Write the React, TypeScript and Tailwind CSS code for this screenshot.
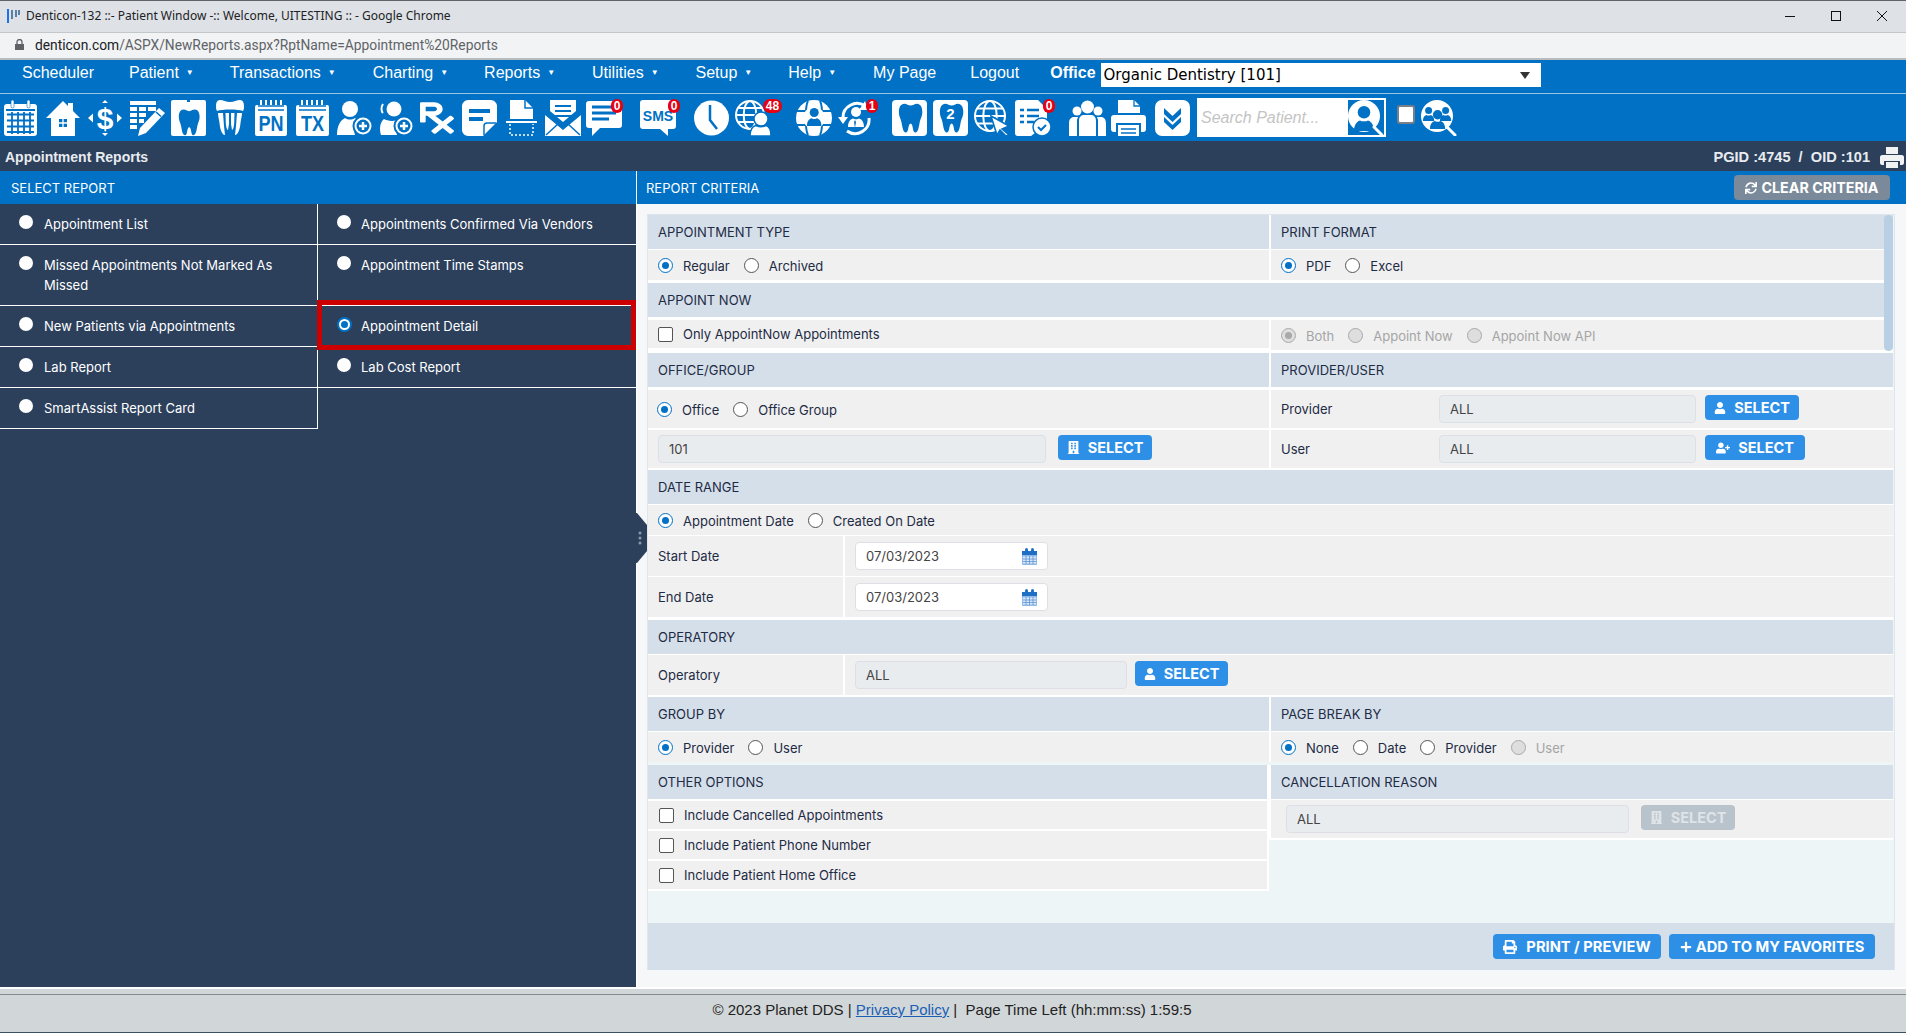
import { ReactNode } from "react";
import { FaBuilding, FaPlus, FaPrescription, FaPrint, FaSync, FaUser, FaUserPlus } from "react-icons/fa";

const BLUE = "#0071c5";
const TOOTH =
  "M7 2C3 2 1 6 1 11c0 5 2 7 3 12 1 6 2 11 5 11s2-10 5-10 2 10 5 10 4-5 5-11c1-5 3-7 3-12 0-5-2-9-6-9-3 0-4 2-7 2S10 2 7 2Z";

function Svg({ w, children }: { w: number; children: ReactNode }) {
  return (
    <svg width={w} height={36} viewBox={`0 0 ${w} 36`} fill="#fff">
      {children}
    </svg>
  );
}

function Globe({ cx = 18, cy = 18, r = 16 }: { cx?: number; cy?: number; r?: number }) {
  return (
    <g fill="none" stroke="#fff" strokeWidth="2">
      <circle cx={cx} cy={cy} r={r} />
      <ellipse cx={cx} cy={cy} rx={r * 0.45} ry={r} />
      <path d={`M${cx - r} ${cy}h${2 * r}M${cx - r * 0.85} ${cy - r * 0.5}h${1.7 * r}M${cx - r * 0.85} ${cy + r * 0.5}h${1.7 * r}`} />
    </g>
  );
}

function Person({ x, y, s = 1, fill = "#fff" }: { x: number; y: number; s?: number; fill?: string }) {
  return (
    <g transform={`translate(${x} ${y}) scale(${s})`} fill={fill}>
      <circle cx="8" cy="5" r="5" />
      <path d="M0 20c0-6 3-8 5-8.500 1 1 5 1 6 0 2 .5 5 2.500 5 8.500Z" />
    </g>
  );
}

function PlusDisc({ cx, cy }: { cx: number; cy: number }) {
  return (
    <g>
      <circle cx={cx} cy={cy} r="9.500" fill="#fff" stroke={BLUE} strokeWidth="2" />
      <circle cx={cx} cy={cy} r="6.500" fill={BLUE} />
      <path d={`M${cx - 4} ${cy}h8M${cx} ${cy - 4}v8`} stroke="#fff" strokeWidth="2.500" />
    </g>
  );
}

const CalendarIcon = () => (
  <Svg w={33}>
    <rect x="0" y="4" width="33" height="32" rx="3" />
    <path d="M2 10h29" stroke={BLUE} strokeWidth="2" />
    <path
      d="M3 14.500h27M3 20.500h27M3 26.500h27M3 32h27M8 12v22M14 12v22M20 12v22M26 12v22"
      stroke={BLUE}
      strokeWidth="1.800"
    />
    <rect x="7" y="0" width="3" height="8" rx="1.500" stroke={BLUE} strokeWidth=".6" />
    <rect x="23" y="0" width="3" height="8" rx="1.500" stroke={BLUE} strokeWidth=".6" />
  </Svg>
);

const HomeIcon = () => (
  <Svg w={34}>
    <path d="M17 1 0 18h5v18h24V18h5l-7-7V3h-5v3Z" />
    <path d="M13 19h8v8h-8Z" fill={BLUE} />
    <path d="M17 19v8M13 23h8" stroke="#fff" strokeWidth="1.300" />
  </Svg>
);

const DollarIcon = () => (
  <Svg w={34}>
    <text x="17" y="29" textAnchor="middle" fontFamily="Liberation Sans" fontWeight="700" fontSize="30">
      $
    </text>
    <path d="M0 18l5-4.500v9ZM34 18l-5-4.500v9ZM17 0l-3 3h6ZM17 36l-3-3h6Z" />
  </Svg>
);

const TablePencilIcon = () => (
  <Svg w={36}>
    <path d="M1 1h26v4H1ZM1 7h7v4H1ZM10 7h7v4h-7ZM19 7h8v4h-8ZM1 13h7v4H1ZM10 13h7v4h-7ZM1 19h7v4H1ZM10 19h5v4h-5ZM1 25h7v4H1Z" />
    <path d="M30 8l6 5-19 20-8 3 2-8Z" />
    <path d="M27 12l5 4.500" stroke={BLUE} strokeWidth="1.500" />
  </Svg>
);

const ToothBoxIcon = () => (
  <Svg w={35}>
    <rect x="0" y="0" width="35" height="36" rx="2" />
    <path d="M16 0h3v2h-3Z" fill={BLUE} />
    <g transform="translate(7 8) scale(.8)" fill={BLUE}>
      <path d={TOOTH} />
    </g>
  </Svg>
);

const ToothBoxLarge = ({ two }: { two?: boolean }) => (
  <Svg w={35}>
    <rect x="0" y="0" width="35" height="36" rx="4" />
    <g transform="translate(6 2) scale(.9)" fill={BLUE}>
      <path d={TOOTH} />
    </g>
    {two && (
      <text x="17.500" y="19" textAnchor="middle" fontFamily="Liberation Sans" fontWeight="700" fontSize="15" fill="#fff">
        2
      </text>
    )}
  </Svg>
);

const RootsIcon = () => (
  <Svg w={28}>
    <path d="M4 0c3 0 6 2 10 2s7-2 10-2c3 0 4 3 4 6 0 2 0 3-1 5-5-2-21-2-26 0C0 9 0 8 0 6c0-3 1-6 4-6Z" />
    <path d="M2 13h5l1 13 1 9c-3 0-5-6-5.500-12C3 19 2 16 2 13ZM9.500 13h3.500v11l-1 6c-1 0-2-3-2.200-7ZM15 13h3.500l-.3 10c-.2 4-1.200 7-2.200 7l-1-6ZM21 13h5c0 3-1 6-1.500 10-.5 6-2.500 12-5.500 12l1-9Z" />
  </Svg>
);

const PadIcon = ({ w, label }: { w: number; label: string }) => (
  <Svg w={w}>
    <rect x="0" y="5" width={w} height="31" rx="2" />
    <path d={`M6 0v9M11 0v9M16 0v9M21 0v9M26 0v9`} stroke="#fff" strokeWidth="2" />
    <path d={`M3 6h${w - 6}M3 10h${w - 6}`} stroke={BLUE} strokeWidth="1.500" />
    <text
      transform={`translate(${w / 2} 31) scale(.95 1.200)`}
      textAnchor="middle"
      fontFamily="Liberation Sans"
      fontWeight="700"
      fontSize="19"
      fill={BLUE}
    >
      {label}
    </text>
  </Svg>
);

const UserPlusIcon = () => (
  <Svg w={36}>
    <circle cx="13" cy="9" r="8" />
    <path d="M0 35c0-10 4-15 8-17 3 2 7 2 10 0l4 2c-4 3-6 9-4 15Z" />
    <PlusDisc cx={26} cy={26} />
  </Svg>
);

const UsersPlusIcon = () => (
  <Svg w={36}>
    <circle cx="16" cy="9" r="7.500" />
    <path d="M3 35c-2-6-1-13 3-16 3 2 11 3 15 0l3 2c-4 3-6 9-5 14Z" />
    <path d="M5 4c-2 3-2 7 0 9" fill="none" stroke="#fff" strokeWidth="2" />
    <PlusDisc cx={26} cy={26} />
  </Svg>
);

const NoteIcon = () => (
  <Svg w={35}>
    <path d="M6 0h23c3 0 6 3 6 6v16L21 36H6c-3 0-6-3-6-6V6c0-3 3-6 6-6Z" />
    <path d="M7 9h21v4H7ZM7 17h14v4H7Z" fill={BLUE} />
    <path d="M22 35V26c0-2 1-3 3-3h9" fill="none" stroke={BLUE} strokeWidth="1.500" />
  </Svg>
);

const ScanDocIcon = () => (
  <Svg w={31}>
    <path d="M4 0h15l8 8v11H4Z" />
    <path d="M19 0v8h8" fill="none" stroke={BLUE} strokeWidth="1.500" />
    <path d="M0 22h31" stroke="#fff" strokeWidth="2" />
    <path d="M4 24v11h23V24" fill="none" stroke="#fff" strokeWidth="1.500" strokeDasharray="2 2" />
  </Svg>
);

const MailIcon = () => (
  <Svg w={36}>
    <path d="M0 15 18 30l18-15v21H0Z" />
    <path d="M5 11V0h26v11l-13 11Z" />
    <path d="M10 6h16M10 11h16M10 16h16" stroke={BLUE} strokeWidth="2" />
    <path d="M1 35l12-11M35 35 23 24" stroke={BLUE} strokeWidth="1.500" />
  </Svg>
);

const ChatIcon = () => (
  <Svg w={36}>
    <path d="M3 1h30c2 0 3 1 3 3v21c0 2-1 3-3 3H14l-8 8v-8H3c-2 0-3-1-3-3V4c0-2 1-3 3-3Z" />
    <path d="M6 7h24M6 13h24M6 19h17" stroke={BLUE} strokeWidth="3" />
  </Svg>
);

const SmsIcon = () => (
  <Svg w={36}>
    <path d="M3 0h30c2 0 3 1 3 3v23c0 2-1 3-3 3h-5v7l-8-7H3c-2 0-3-1-3-3V3c0-2 1-3 3-3Z" />
    <text x="18" y="21" textAnchor="middle" fontFamily="Liberation Sans" fontWeight="700" fontSize="14" fill={BLUE}>
      SMS
    </text>
  </Svg>
);

const ClockIcon = () => (
  <Svg w={35}>
    <circle cx="17.500" cy="18" r="17.500" />
    <path d="M16 5v15l7 9" fill="none" stroke={BLUE} strokeWidth="2.500" />
  </Svg>
);

const GlobeUserIcon = () => (
  <Svg w={36}>
    <Globe cx={15} cy={15} r={14} />
    <circle cx="26" cy="19" r="7" stroke={BLUE} strokeWidth="1.500" />
    <path d="M15 36c0-8 4-10 6-10.500 3 1.500 7 1.500 10 0 2 .5 5 2.500 5 10.500Z" stroke={BLUE} strokeWidth="1.500" />
  </Svg>
);

const GlobePersonIcon = () => (
  <Svg w={36}>
    <circle cx="18" cy="18" r="18" />
    <path d="M0 11h36M0 25h36M12 1c-3 5-3 29 0 34M24 1c3 5 3 29 0 34" fill="none" stroke={BLUE} strokeWidth="2" />
    <circle cx="18" cy="18" r="11" />
    <Person x={11} y={8} s={0.9} fill={BLUE} />
  </Svg>
);

const RefreshUserIcon = () => (
  <Svg w={35}>
    <path d="M5 18A14 14 0 0 1 27 6" fill="none" stroke="#fff" strokeWidth="3" />
    <path d="M31 18A14 14 0 0 1 9 31" fill="none" stroke="#fff" strokeWidth="3" />
    <path d="M0 17h10l-5 7ZM27 1l3 9-9 0Z" />
    <Person x={10} y={7} s={1} />
    <path d="M17 20l1 2-1 6-1-6Z" fill={BLUE} />
  </Svg>
);

const GlobeCursorIcon = () => (
  <Svg w={35}>
    <Globe cx={16} cy={16} r={15} />
    <path d="M17 16 35 26l-7 3 7 6-3 1-6-6-3 5Z" stroke={BLUE} strokeWidth="1.500" />
  </Svg>
);

const DocCheckIcon = () => (
  <Svg w={36}>
    <path d="M3 0h20l9 9v15l-16 12H3c-2 0-3-1-3-3V3c0-2 1-3 3-3Z" />
    <path d="M5 10h4M12 10h12M5 16h4M12 16h12M5 22h4M12 22h7" stroke={BLUE} strokeWidth="2.500" />
    <circle cx="27" cy="27" r="9" stroke={BLUE} strokeWidth="1.500" />
    <path d="M23 27l3 3 5-5" fill="none" stroke={BLUE} strokeWidth="2" />
  </Svg>
);

const PeopleIcon = () => (
  <Svg w={37}>
    <circle cx="8" cy="11" r="4.500" />
    <circle cx="29" cy="11" r="4.500" />
    <circle cx="18.500" cy="7" r="6.500" />
    <path d="M0 36V24c0-5 2-7 5-7h4l-1 3v16ZM37 36V24c0-5-2-7-5-7h-4l1 3v16ZM10 36V21c0-5 3-6 5-6h7c2 0 5 1 5 6v15Z" />
  </Svg>
);

const PrinterIcon = () => (
  <Svg w={35}>
    <path d="M7 0h16l6 6v7H7Z" />
    <path d="M23 0v6h6" fill="none" stroke={BLUE} strokeWidth="1.300" />
    <path d="M3 15h29c2 0 3 1 3 3v11c0 2-1 3-3 3h-2v-9H5v9H3c-2 0-3-1-3-3V18c0-2 1-3 3-3Z" />
    <path d="M7 25h21v11H7Z" />
    <path d="M10 29h15M10 33h15" stroke={BLUE} strokeWidth="1.500" />
  </Svg>
);

const ChevronsIcon = () => (
  <Svg w={35}>
    <rect x="0" y="0" width="35" height="36" rx="7" />
    <path d="M9 8l8.500 8L26 8v6l-8.500 8L9 14ZM9 17l8.500 8L26 17v5l-8.500 8L9 22Z" fill={BLUE} />
  </Svg>
);

const SearchUserIcon = () => (
  <svg width="36" height="36" viewBox="0 0 36 36" fill="#fff">
    <circle cx="16" cy="16" r="16" />
    <Person x={6} y={6} s={1.250} fill={BLUE} />
    <path d="M26 27l8 8" stroke="#fff" strokeWidth="3" strokeLinecap="round" />
  </svg>
);

const SearchGroupIcon = () => (
  <Svg w={36}>
    <circle cx="16" cy="16" r="16" />
    <Person x={2} y={7} s={0.7} fill={BLUE} />
    <Person x={19} y={7} s={0.7} fill={BLUE} />
    <Person x={9} y={10} s={0.95} fill={BLUE} />
    <path d="M26 27l8 8" stroke="#fff" strokeWidth="3" strokeLinecap="round" />
  </Svg>
);

function MiniCalendar() {
  return (
    <svg width="15" height="17" viewBox="0 0 15 17" className="ml-auto mr-[10px] mt-[1px]">
      <rect x="0" y="3" width="15" height="14" rx="1" fill="#8db8e8" />
      <rect x="0" y="3" width="15" height="4" fill="#1f6fc4" />
      <rect x="3" y="0" width="3" height="5" rx="1.500" fill="#1f6fc4" />
      <rect x="9" y="0" width="3" height="5" rx="1.500" fill="#1f6fc4" />
      <path d="M1 8.500h13v7H1Z" fill="#dbe8f7" />
      <path d="M1 11h13M1 13.500h13M4 8v8M7.500 8v8M11 8v8" stroke="#5b93d3" strokeWidth=".8" />
    </svg>
  );
}

function Badge({ label, className }: { label: string; className: string }) {
  return (
    <span
      className={`absolute flex h-[14px] items-center justify-center rounded-full bg-[#e60012] font-['Liberation_Sans',sans-serif] text-[12px] leading-none font-bold text-white ${className}`}
    >
      {label}
    </span>
  );
}

function NavItem({ label, caret, className = "" }: { label: string; caret?: boolean; className?: string }) {
  return (
    <div className={`mb-[7px] flex items-center px-[18px] whitespace-nowrap ${className}`}>
      <span>{label}</span>
      {caret && <span className="ml-[7px] text-[8px] leading-none">▼</span>}
    </div>
  );
}

function Radio({ checked, disabled, big }: { checked?: boolean; disabled?: boolean; big?: boolean }) {
  if (big) {
    return checked ? (
      <span className="flex h-[15px] w-[15px] shrink-0 items-center justify-center rounded-full border-[2px] border-[#0071c5] bg-white">
        <span className="h-[7px] w-[7px] rounded-full bg-[#0071c5]" />
      </span>
    ) : (
      <span className="h-[14px] w-[14px] shrink-0 rounded-full bg-white" />
    );
  }
  if (disabled) {
    return (
      <span className="flex h-[15px] w-[15px] shrink-0 items-center justify-center rounded-full border border-[#a9a9a9] bg-[#dedede]">
        {checked && <span className="h-[7px] w-[7px] rounded-full bg-[#a9a9a9]" />}
      </span>
    );
  }
  return checked ? (
    <span className="flex h-[15px] w-[15px] shrink-0 items-center justify-center rounded-full border-[1.5px] border-[#0071c5] bg-white">
      <span className="h-[7px] w-[7px] rounded-full bg-[#0071c5]" />
    </span>
  ) : (
    <span className="h-[15px] w-[15px] shrink-0 rounded-full border-[1.5px] border-[#555] bg-white" />
  );
}

type Opt = { label: string; checked?: boolean; disabled?: boolean };

function RadioRow({ opts }: { opts: Opt[] }) {
  return (
    <div className="flex items-center gap-[14px]">
      {opts.map((o) => (
        <label key={o.label} className="flex items-center gap-[10px]">
          <Radio checked={o.checked} disabled={o.disabled} />
          <span className={`mt-[1px] ${o.disabled ? "text-[#a5a5a5]" : ""}`}>{o.label}</span>
        </label>
      ))}
    </div>
  );
}

function Check({ label }: { label: string }) {
  return (
    <label className="flex items-center gap-[10px]">
      <span className="h-[15px] w-[15px] shrink-0 rounded-[2px] border-[1.5px] border-[#555] bg-white" />
      <span>{label}</span>
    </label>
  );
}

function Head({ children }: { children?: ReactNode }) {
  return <div className="flex h-[34px] items-center bg-[#d5dfe9] pl-[10px] text-[#1e2b45]">{children}</div>;
}

function Field({ value, className, white, children }: { value: string; className: string; white?: boolean; children?: ReactNode }) {
  return (
    <div
      className={`flex h-[28px] items-center rounded-[4px] border border-[#dcdfe6] pl-[10px] text-[#444] ${white ? "bg-white" : "bg-[#e9ecef]"} ${className}`}
    >
      {value}
      {children}
    </div>
  );
}

function SelectBtn({ icon, className, disabled }: { icon: ReactNode; className: string; disabled?: boolean }) {
  return (
    <button
      className={`flex h-[25px] items-center justify-center gap-[8px] rounded-[4px] text-[14.500px] font-bold ${disabled ? "bg-[#b9c3cc] text-[#dfe4e8]" : "bg-[#2e8fe6] text-white"} ${className}`}
    >
      {icon}
      SELECT
    </button>
  );
}

function Report({ label, checked, col2, tall, last }: { label: string; checked?: boolean; col2?: boolean; tall?: boolean; last?: boolean }) {
  return (
    <div
      className={`flex items-start pt-[11px] pr-[16px] ${tall ? "h-[61px]" : "h-[41px]"} ${col2 ? (checked ? "gap-[9px] pl-[19px]" : "gap-[10px] pl-[19px]") : "gap-[11px] border-r border-white pl-[19px]"} ${last ? "" : "border-b border-white"} ${last && !col2 ? "border-b border-white" : ""}`}
    >
      <Radio big checked={checked} />
      <span className="-mt-[1.5px] text-white">{label}</span>
    </div>
  );
}

export default function App() {
  return (
    <div className="flex h-screen flex-col overflow-hidden bg-white font-['Inter',sans-serif] text-[13px] leading-[20px] text-[#1e2b45]">
      {/* Chrome title */}
      <div className="flex h-[32px] shrink-0 items-center border-t border-[#5f6368] bg-[#dee1e6] pb-[1px] pl-[7px] font-['Noto_Sans',sans-serif] text-[12px] text-[#202124]">
        <svg width="13" height="14" viewBox="0 0 13 14" className="mr-[6px]">
          <path d="M0 0h2v14H0Z" fill="#1a73e8" />
          <path d="M4 1h2v9H4ZM8 1h2v7H8ZM11 1h2v5h-2Z" fill="#5a7fa8" />
        </svg>
        <span>Denticon-132 ::- Patient Window -:: Welcome, UITESTING :: - Google Chrome</span>
        <div className="ml-auto flex items-center gap-[36px] pr-[19px]">
          <span className="h-px w-[10px] bg-[#111]" />
          <span className="h-[10px] w-[10px] border border-[#111]" />
          <svg width="10" height="10" viewBox="0 0 10 10" stroke="#111" strokeWidth="1">
            <path d="M0 0l10 10M10 0 0 10" />
          </svg>
        </div>
      </div>
      {/* Chrome address */}
      <div className="flex h-[28px] shrink-0 items-center border-t border-b-2 border-t-[#c4c7ca] border-b-[#b9bcbf] bg-[#f1f3f4] pb-[2px] pl-[15px] font-['Roboto',sans-serif] text-[13.800px] text-[#5f6368]">
        <svg width="9" height="11" viewBox="0 0 9 11" className="mr-[11px]" fill="#5f6368">
          <path d="M0 5h9v6H0Z" />
          <path d="M2 5V3a2.500 2.500 0 0 1 5 0v2" fill="none" stroke="#5f6368" strokeWidth="1.300" />
        </svg>
        <span>
          <span className="text-[#202124]">denticon.com</span>/ASPX/NewReports.aspx?RptName=Appointment%20Reports
        </span>
      </div>
      {/* Menu */}
      <div className="flex h-[34px] shrink-0 items-center border-b border-[#9cc4e4] bg-[#0071c5] pl-[4px] font-['Liberation_Sans',sans-serif] text-[16px] text-white">
        <NavItem label="Scheduler" />
        <NavItem label="Patient" caret className="-ml-[1px]" />
        <NavItem label="Transactions" caret />
        <NavItem label="Charting" caret className="ml-[1px]" />
        <NavItem label="Reports" caret />
        <NavItem label="Utilities" caret className="ml-[1px]" />
        <NavItem label="Setup" caret className="ml-[1px]" />
        <NavItem label="Help" caret />
        <NavItem label="My Page" className="ml-[1px]" />
        <NavItem label="Logout" className="-ml-[2px]" />
        <span className="mb-[7px] ml-[13px] font-bold">Office</span>
        <div className="mb-[4px] ml-[5px] flex h-[24px] w-[440px] items-center bg-white pl-[3px] font-['DejaVu_Sans',sans-serif] text-[15px] text-black">
          Organic Dentistry [101]
          <span className="ml-auto mr-[11px] mt-[2px] h-0 w-0 border-x-[5px] border-t-[7px] border-x-transparent border-t-[#333]" />
        </div>
      </div>
      {/* Icon bar */}
      <div className="flex h-[47px] shrink-0 items-center bg-[#0071c5] pl-[4px]">
        <div><CalendarIcon /></div>
        <div className="ml-[9px]"><HomeIcon /></div>
        <div className="ml-[8px]"><DollarIcon /></div>
        <div className="ml-[7px]"><TablePencilIcon /></div>
        <div className="ml-[6px]"><ToothBoxIcon /></div>
        <div className="ml-[10px]"><RootsIcon /></div>
        <div className="ml-[11px]"><PadIcon w={32} label="PN" /></div>
        <div className="ml-[9px]"><PadIcon w={33} label="TX" /></div>
        <div className="ml-[8px]"><UserPlusIcon /></div>
        <div className="ml-[5px]"><UsersPlusIcon /></div>
        <div className="ml-[6px] h-[36px] w-[34px] text-white">
          <FaPrescription className="h-[36px] w-[34px]" preserveAspectRatio="none" />
        </div>
        <div className="ml-[8px]"><NoteIcon /></div>
        <div className="ml-[9px]"><ScanDocIcon /></div>
        <div className="ml-[8px]"><MailIcon /></div>
        <div className="relative ml-[5px]">
          <ChatIcon />
          <Badge label="0" className="-top-[1px] -right-[1px] w-[12px]" />
        </div>
        <div className="relative ml-[18px]">
          <SmsIcon />
          <Badge label="0" className="-top-[1px] -right-[4px] w-[12px]" />
        </div>
        <div className="ml-[18px]"><ClockIcon /></div>
        <div className="relative ml-[6px]">
          <GlobeUserIcon />
          <Badge label="48" className="-top-[1px] -right-[11px] w-[19px]" />
        </div>
        <div className="ml-[25px]"><GlobePersonIcon /></div>
        <div className="relative ml-[6px]">
          <RefreshUserIcon />
          <Badge label="1" className="-top-[1px] -right-[5px] w-[12px]" />
        </div>
        <div className="ml-[19px]"><ToothBoxLarge /></div>
        <div className="ml-[6px]"><ToothBoxLarge two /></div>
        <div className="ml-[6px]"><GlobeCursorIcon /></div>
        <div className="relative ml-[6px]">
          <DocCheckIcon />
          <Badge label="0" className="-top-[1px] -right-[4px] w-[12px]" />
        </div>
        <div className="ml-[18px]"><PeopleIcon /></div>
        <div className="ml-[5px]"><PrinterIcon /></div>
        <div className="ml-[9px]"><ChevronsIcon /></div>
        <div className="ml-[7px] flex h-[39px] w-[189px] items-center justify-between bg-white pl-[4px] pr-[2px] font-['Liberation_Sans',sans-serif] text-[16px] text-[#c4c4c4] italic">
          Search Patient...
          <span className="flex h-[35px] w-[36px] bg-[#0071c5]">
            <SearchUserIcon />
          </span>
        </div>
        <span className="ml-[11px] mb-[6px] h-[19px] w-[18px] rounded-[3px] border-2 border-[#75808a] bg-white" />
        <div className="ml-[6px]"><SearchGroupIcon /></div>
      </div>
      {/* Page title */}
      <div className="flex h-[30px] shrink-0 items-center justify-between bg-[#2c405c] pt-[2px] pr-[2px] pl-[5px] font-['Liberation_Sans',sans-serif] text-[14px] font-bold text-[#e8ecf0]">
        <span>Appointment Reports</span>
        <div className="flex items-center gap-[10px] text-[14.600px]">
          <span>PGID :4745&nbsp; /&nbsp; OID :101</span>
          <svg width="24" height="21" viewBox="0 0 24 21" fill="#f0f2f4">
            <path d="M6 0h12v7H6ZM2 8h20c1 0 2 1 2 2v6c0 1-1 2-2 2h-2v-4H4v4H2c-1 0-2-1-2-2v-6c0-1 1-2 2-2ZM6 15h12v6H6Z" />
          </svg>
        </div>
      </div>
      {/* Main */}
      <div className="flex min-h-0 flex-1">
        <div className="flex w-[636px] flex-col bg-[#2c405c]">
          <div className="flex h-[33px] shrink-0 items-center bg-[#0071c5] pl-[11px] text-white">SELECT REPORT</div>
          <div className="relative grid grid-cols-[318px_318px]">
            <Report label="Appointment List" />
            <Report col2 label="Appointments Confirmed Via Vendors" />
            <Report tall label="Missed Appointments Not Marked As Missed" />
            <Report tall col2 label="Appointment Time Stamps" />
            <Report label="New Patients via Appointments" />
            <Report col2 checked label="Appointment Detail" />
            <Report label="Lab Report" />
            <Report col2 label="Lab Cost Report" />
            <Report last label="SmartAssist Report Card" />
            {/* selected report outline */}
            <div className="absolute top-[96px] left-[317px] h-[50px] w-[319px] border-y-[5px] border-x-[5px] border-[#cc0000]" />
          </div>
        </div>
        <div className="relative flex flex-1 flex-col border-l border-white bg-[#f6f7f9]">
          <div className="flex h-[33px] shrink-0 items-center justify-between bg-[#0071c5] pl-[9px] pr-[16px] text-white">
            <span>REPORT CRITERIA</span>
            <button className="flex h-[25px] w-[156px] items-center justify-center gap-[4px] rounded-[4px] bg-[#7a8a9a] text-[14.300px] font-bold">
              <FaSync size={12} />
              CLEAR CRITERIA
            </button>
          </div>
          {/* criteria frame */}
          <div className="ml-[10px] mt-[10px] flex h-[756px] w-[1248px] flex-col border border-b-0 border-[#dfe5ea] bg-[#eef5f7]">
            <div className="relative flex-1">
              <div className="flex w-[1245px] flex-col bg-white">
                <div className="grid grid-cols-[621px_622px] gap-x-[2px] gap-y-[1px]">
                  <Head>APPOINTMENT TYPE</Head>
                  <Head>PRINT FORMAT</Head>
                  <div className="flex h-[30px] items-center bg-[#f0f0f0] pl-[10px]">
                    <RadioRow opts={[{ label: "Regular", checked: true }, { label: "Archived" }]} />
                  </div>
                  <div className="flex h-[30px] items-center bg-[#f0f0f0] pl-[10px]">
                    <RadioRow opts={[{ label: "PDF", checked: true }, { label: "Excel" }]} />
                  </div>
                </div>
                <div className="mt-[3px]">
                  <Head>APPOINT NOW</Head>
                </div>
                <div className="mt-[3px] grid grid-cols-[621px_622px] gap-x-[2px]">
                  <div className="flex h-[28px] items-center bg-[#f0f0f0] pl-[10px]">
                    <Check label="Only AppointNow Appointments" />
                  </div>
                  <div className="flex h-[30px] items-center bg-[#f0f0f0] pl-[10px]">
                    <RadioRow
                      opts={[
                        { label: "Both", checked: true, disabled: true },
                        { label: "Appoint Now", disabled: true },
                        { label: "Appoint Now API", disabled: true },
                      ]}
                    />
                  </div>
                </div>
                <div className="mt-[3px] grid grid-cols-[621px_622px] gap-x-[2px] gap-y-[2px]">
                  <div className="mb-[1px]"><Head>OFFICE/GROUP</Head></div>
                  <div className="mb-[1px]"><Head>PROVIDER/USER</Head></div>
                  <div className="flex h-[38px] items-center bg-[#f0f0f0] pl-[9px]">
                    <RadioRow opts={[{ label: "Office", checked: true }, { label: "Office Group" }]} />
                  </div>
                  <div className="flex h-[38px] items-center bg-[#f0f0f0] pl-[10px]">
                    <span className="w-[158px]">Provider</span>
                    <Field value="ALL" className="w-[257px]" />
                    <SelectBtn icon={<FaUser size={12} />} className="mb-[3px] ml-[9px] w-[94px]" />
                  </div>
                  <div className="flex h-[38px] items-center bg-[#f0f0f0] pl-[10px]">
                    <Field value="101" className="w-[388px]" />
                    <SelectBtn icon={<FaBuilding size={13} />} className="mb-[3px] ml-[12px] w-[94px]" />
                  </div>
                  <div className="flex h-[38px] items-center bg-[#f0f0f0] pl-[10px]">
                    <span className="w-[158px]">User</span>
                    <Field value="ALL" className="w-[257px]" />
                    <SelectBtn icon={<FaUserPlus size={14} />} className="mb-[3px] ml-[9px] w-[100px]" />
                  </div>
                </div>
                <div className="mt-[2px]">
                  <Head>DATE RANGE</Head>
                </div>
                <div className="mt-[1px] flex h-[30px] items-center bg-[#f0f0f0] pl-[10px]">
                  <RadioRow opts={[{ label: "Appointment Date", checked: true }, { label: "Created On Date" }]} />
                </div>
                <div className="mt-[1px] flex h-[40px] items-center bg-[#f0f0f0]">
                  <span className="flex h-full w-[197px] items-center border-r-2 border-white pl-[10px]">Start Date</span>
                  <Field white value="07/03/2023" className="ml-[10px] w-[193px]"><MiniCalendar /></Field>
                </div>
                <div className="mt-[1px] flex h-[40px] items-center bg-[#f0f0f0]">
                  <span className="flex h-full w-[197px] items-center border-r-2 border-white pl-[10px]">End Date</span>
                  <Field white value="07/03/2023" className="ml-[10px] w-[193px]"><MiniCalendar /></Field>
                </div>
                <div className="mt-[3px]">
                  <Head>OPERATORY</Head>
                </div>
                <div className="mt-[1px] flex h-[40px] items-center bg-[#f0f0f0]">
                  <span className="flex h-full w-[197px] items-center border-r-2 border-white pl-[10px]">Operatory</span>
                  <Field value="ALL" className="ml-[10px] w-[272px]" />
                  <SelectBtn icon={<FaUser size={12} />} className="mb-[3px] ml-[8px] w-[93px]" />
                </div>
                <div className="mt-[2px] grid grid-cols-[621px_622px] gap-x-[2px] gap-y-[1px]">
                  <Head>GROUP BY</Head>
                  <Head>PAGE BREAK BY</Head>
                  <div className="flex h-[30px] items-center bg-[#f0f0f0] pl-[10px]">
                    <RadioRow opts={[{ label: "Provider", checked: true }, { label: "User" }]} />
                  </div>
                  <div className="flex h-[30px] items-center bg-[#f0f0f0] pl-[10px]">
                    <RadioRow
                      opts={[
                        { label: "None", checked: true },
                        { label: "Date" },
                        { label: "Provider" },
                        { label: "User", disabled: true },
                      ]}
                    />
                  </div>
                </div>
              </div>
              <div className="mt-[3px] grid w-[1245px] grid-cols-[621px_624px] items-start">
                <div className="flex flex-col gap-[2px] border-r-2 border-b-2 border-white bg-white">
                  <Head>OTHER OPTIONS</Head>
                  <div className="flex h-[28px] items-center bg-[#f0f0f0] pl-[11px]"><Check label="Include Cancelled Appointments" /></div>
                  <div className="flex h-[28px] items-center bg-[#f0f0f0] pl-[11px]"><Check label="Include Patient Phone Number" /></div>
                  <div className="flex h-[28px] items-center bg-[#f0f0f0] pl-[11px]"><Check label="Include Patient Home Office" /></div>
                </div>
                <div className="flex flex-col gap-[1px] border-b-2 border-white bg-white pl-[2px]">
                  <Head>CANCELLATION REASON</Head>
                  <div className="flex h-[38px] items-center bg-[#f0f0f0] pl-[15px]">
                    <Field value="ALL" className="w-[343px]" />
                    <SelectBtn disabled icon={<FaBuilding size={13} />} className="mb-[3px] ml-[12px] w-[94px]" />
                  </div>
                </div>
              </div>
              {/* scroll thumb */}
              <div className="absolute top-0 left-[1236px] h-[136px] w-[9px] rounded-full bg-[#b9cfe3]" />
            </div>
            <div className="flex h-[47px] shrink-0 items-center justify-end gap-[8px] bg-[#d5dfe9] pr-[19px]">
              <button className="flex h-[25px] w-[168px] items-center justify-center gap-[9px] rounded-[4px] bg-[#2e8fe6] text-[14.700px] font-bold text-white">
                <FaPrint size={14} />
                PRINT / PREVIEW
              </button>
              <button className="flex h-[25px] w-[206px] items-center justify-center gap-[4px] rounded-[4px] bg-[#2e8fe6] text-[14.700px] font-bold text-white">
                <FaPlus size={12} />
                ADD TO MY FAVORITES
              </button>
            </div>
          </div>
          {/* collapse handle */}
          <svg width="11" height="50" viewBox="0 0 11 50" className="absolute top-[342px] -left-px">
            <path d="M0 0h1l10 12v26L1 50H0Z" fill="#2c405c" />
            <circle cx="4" cy="20" r="1.500" fill="#8c99a8" />
            <circle cx="4" cy="25" r="1.500" fill="#8c99a8" />
            <circle cx="4" cy="30" r="1.500" fill="#8c99a8" />
          </svg>
        </div>
      </div>
      {/* Footer */}
      <div className="mt-[2px] h-[44px] shrink-0 border-b border-[#3c5060] bg-[#d1d6d8] pt-[5px] font-['Liberation_Sans',sans-serif] text-[15px] text-[#222]">
        <div className="flex h-full items-center justify-center border-t border-[#868b8e] pr-[2px] pb-[7px]">
          <span>
            © 2023 Planet DDS |{" "}
            <a className="text-[#1a5fb4] underline">Privacy Policy</a> |&nbsp; Page Time Left (hh:mm:ss) 1:59:5
          </span>
        </div>
      </div>
    </div>
  );
}
